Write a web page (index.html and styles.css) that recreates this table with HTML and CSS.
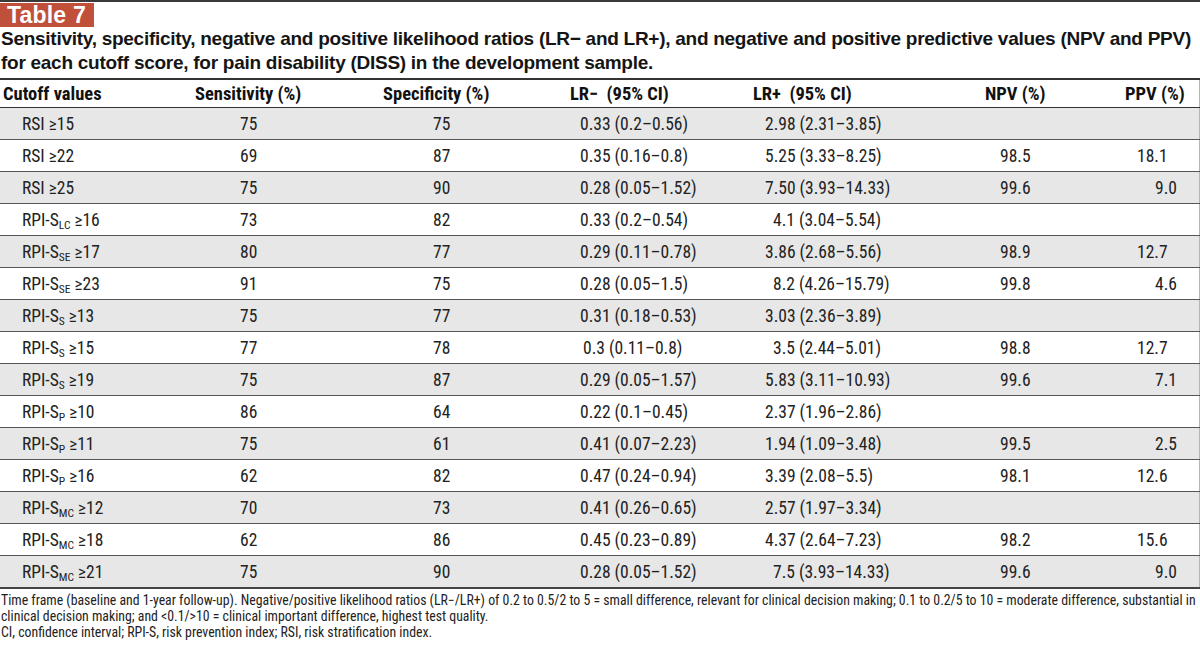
FILE: index.html
```html
<!DOCTYPE html>
<html>
<head>
<meta charset="utf-8">
<link rel="stylesheet" href="styles.css">
</head>
<body>
<div class="page">
  <div class="badge-row"><span class="badge">Table 7</span></div>
  <h1 class="caption">Sensitivity, specificity, negative and positive likelihood ratios (LR− and LR+), and negative and positive predictive values (NPV and PPV) for each cutoff score, for pain disability (DISS) in the development sample.</h1>
  <table class="data">
    <colgroup>
      <col class="c1"><col class="c2"><col class="c3"><col class="c4"><col class="c5"><col class="c6"><col class="c7">
    </colgroup>
    <thead>
      <tr>
        <th class="h1">Cutoff values</th>
        <th>Sensitivity (%)</th>
        <th>Specificity (%)</th>
        <th>LR−&nbsp; (95% CI)</th>
        <th>LR+&nbsp; (95% CI)</th>
        <th>NPV (%)</th>
        <th>PPV (%)</th>
      </tr>
    </thead>
    <tbody>
      <tr><td class="cut">RSI ≥15</td><td class="sens">75</td><td class="spec">75</td><td class="lrn">0.33 (0.2–0.56)</td><td class="lrp">2.98 (2.31–3.85)</td><td class="npv"></td><td class="ppv"></td></tr>
      <tr><td class="cut">RSI ≥22</td><td class="sens">69</td><td class="spec">87</td><td class="lrn">0.35 (0.16–0.8)</td><td class="lrp">5.25 (3.33–8.25)</td><td class="npv">98.5</td><td class="ppv">18.1</td></tr>
      <tr><td class="cut">RSI ≥25</td><td class="sens">75</td><td class="spec">90</td><td class="lrn">0.28 (0.05–1.52)</td><td class="lrp">7.50 (3.93–14.33)</td><td class="npv">99.6</td><td class="ppv one">9.0</td></tr>
      <tr><td class="cut">RPI-S<sub>LC</sub> ≥16</td><td class="sens">73</td><td class="spec">82</td><td class="lrn">0.33 (0.2–0.54)</td><td class="lrp ind">4.1 (3.04–5.54)</td><td class="npv"></td><td class="ppv"></td></tr>
      <tr><td class="cut">RPI-S<sub>SE</sub> ≥17</td><td class="sens">80</td><td class="spec">77</td><td class="lrn">0.29 (0.11–0.78)</td><td class="lrp">3.86 (2.68–5.56)</td><td class="npv">98.9</td><td class="ppv">12.7</td></tr>
      <tr><td class="cut">RPI-S<sub>SE</sub> ≥23</td><td class="sens">91</td><td class="spec">75</td><td class="lrn">0.28 (0.05–1.5)</td><td class="lrp ind">8.2 (4.26–15.79)</td><td class="npv">99.8</td><td class="ppv one">4.6</td></tr>
      <tr><td class="cut">RPI-S<sub>S</sub> ≥13</td><td class="sens">75</td><td class="spec">77</td><td class="lrn">0.31 (0.18–0.53)</td><td class="lrp">3.03 (2.36–3.89)</td><td class="npv"></td><td class="ppv"></td></tr>
      <tr><td class="cut">RPI-S<sub>S</sub> ≥15</td><td class="sens">77</td><td class="spec">78</td><td class="lrn ind">0.3 (0.11–0.8)</td><td class="lrp ind">3.5 (2.44–5.01)</td><td class="npv">98.8</td><td class="ppv">12.7</td></tr>
      <tr><td class="cut">RPI-S<sub>S</sub> ≥19</td><td class="sens">75</td><td class="spec">87</td><td class="lrn">0.29 (0.05–1.57)</td><td class="lrp">5.83 (3.11–10.93)</td><td class="npv">99.6</td><td class="ppv one">7.1</td></tr>
      <tr><td class="cut">RPI-S<sub>P</sub> ≥10</td><td class="sens">86</td><td class="spec">64</td><td class="lrn">0.22 (0.1–0.45)</td><td class="lrp">2.37 (1.96–2.86)</td><td class="npv"></td><td class="ppv"></td></tr>
      <tr><td class="cut">RPI-S<sub>P</sub> ≥11</td><td class="sens">75</td><td class="spec">61</td><td class="lrn">0.41 (0.07–2.23)</td><td class="lrp">1.94 (1.09–3.48)</td><td class="npv">99.5</td><td class="ppv one">2.5</td></tr>
      <tr><td class="cut">RPI-S<sub>P</sub> ≥16</td><td class="sens">62</td><td class="spec">82</td><td class="lrn">0.47 (0.24–0.94)</td><td class="lrp">3.39 (2.08–5.5)</td><td class="npv">98.1</td><td class="ppv">12.6</td></tr>
      <tr><td class="cut">RPI-S<sub>MC</sub> ≥12</td><td class="sens">70</td><td class="spec">73</td><td class="lrn">0.41 (0.26–0.65)</td><td class="lrp">2.57 (1.97–3.34)</td><td class="npv"></td><td class="ppv"></td></tr>
      <tr><td class="cut">RPI-S<sub>MC</sub> ≥18</td><td class="sens">62</td><td class="spec">86</td><td class="lrn">0.45 (0.23–0.89)</td><td class="lrp">4.37 (2.64–7.23)</td><td class="npv">98.2</td><td class="ppv">15.6</td></tr>
      <tr><td class="cut">RPI-S<sub>MC</sub> ≥21</td><td class="sens">75</td><td class="spec">90</td><td class="lrn">0.28 (0.05–1.52)</td><td class="lrp ind">7.5 (3.93–14.33)</td><td class="npv">99.6</td><td class="ppv one">9.0</td></tr>
    </tbody>
  </table>
  <div class="notes">
    <p>Time frame (baseline and 1-year follow-up). Negative/positive likelihood ratios (LR−/LR+) of 0.2 to 0.5/2 to 5 = small difference, relevant for clinical decision making; 0.1 to 0.2/5 to 10 = moderate difference, substantial in clinical decision making; and &lt;0.1/&gt;10 = clinical important difference, highest test quality.</p>
    <p>CI, confidence interval; RPI-S, risk prevention index; RSI, risk stratification index.</p>
  </div>
</div>
</body>
</html>
```

FILE: styles.css
```css
html, body {
  margin: 0;
  padding: 0;
  background: #ffffff;
}

.page {
  width: 1200px;
  border-top: 2px solid #3a3a3a;
  color: #1a1a1a;
  font-family: "Roboto Condensed", "Roboto", "Liberation Sans", Arial, sans-serif;
  font-stretch: 75%;
}

.badge-row {
  display: flex;
  padding-top: 1px;
}

.badge {
  background: #c0503a;
  color: #ffffff;
  font-family: "Liberation Sans", Arial, sans-serif;
  font-stretch: normal;
  font-weight: bold;
  font-size: 23px;
  line-height: 24px;
  height: 24px;
  padding: 0 8px 0 7px;
  letter-spacing: 0.2px;
}

.caption {
  margin: 0;
  padding: 0 1px 0 1px;
  font-family: "Liberation Sans", Arial, sans-serif;
  font-stretch: normal;
  font-weight: bold;
  font-size: 19px;
  line-height: 24px;
  letter-spacing: -0.27px;
  color: #151515;
  height: 51px;
}

.data {
  width: 1199px;
  border-collapse: collapse;
  table-layout: fixed;
  border-top: 2px solid #333333;
  border-bottom: 2px solid #444444;
  border-right: 1px solid #b5b5b5;
}

.c1 { width: 195px; }
.c2 { width: 188px; }
.c3 { width: 187px; }
.c4 { width: 183px; }
.c5 { width: 232px; }
.c6 { width: 140px; }
.c7 { width: 74px; }

.data th {
  text-align: left;
  font-weight: bold;
  font-size: 18.5px;
  height: 27px;
  padding: 0;
  vertical-align: middle;
  border-bottom: 1px solid #333333;
  color: #111111;
  white-space: nowrap;
}

.data th.h1 {
  padding-left: 3px;
}

.data td {
  font-size: 17.5px;
  height: 31px;
  padding: 0;
  vertical-align: middle;
  border-bottom: 1px solid #555555;
  color: #222222;
  white-space: nowrap;
}

.data tbody tr:nth-child(odd) td {
  background: #e7e7e7;
}

.data tbody tr:last-child td {
  border-bottom: none;
}

.data sub {
  font-size: 11.5px;
  vertical-align: -3px;
  line-height: 0;
}

.cut { padding-left: 22px !important; }
.sens { padding-left: 45px !important; }
.spec { padding-left: 50px !important; }
.lrn { padding-left: 10px !important; }
.lrn.ind { padding-left: 13px !important; }
.lrp { padding-left: 12px !important; }
.lrp.ind { padding-left: 20px !important; }
.npv { padding-left: 15px !important; }
.ppv { padding-left: 12px !important; }
.ppv.one { padding-left: 30px !important; }

.notes {
  padding: 3px 0 0 1px;
  font-size: 13.8px;
  line-height: 16px;
  color: #222222;
}

.notes p {
  margin: 0;
}
```
